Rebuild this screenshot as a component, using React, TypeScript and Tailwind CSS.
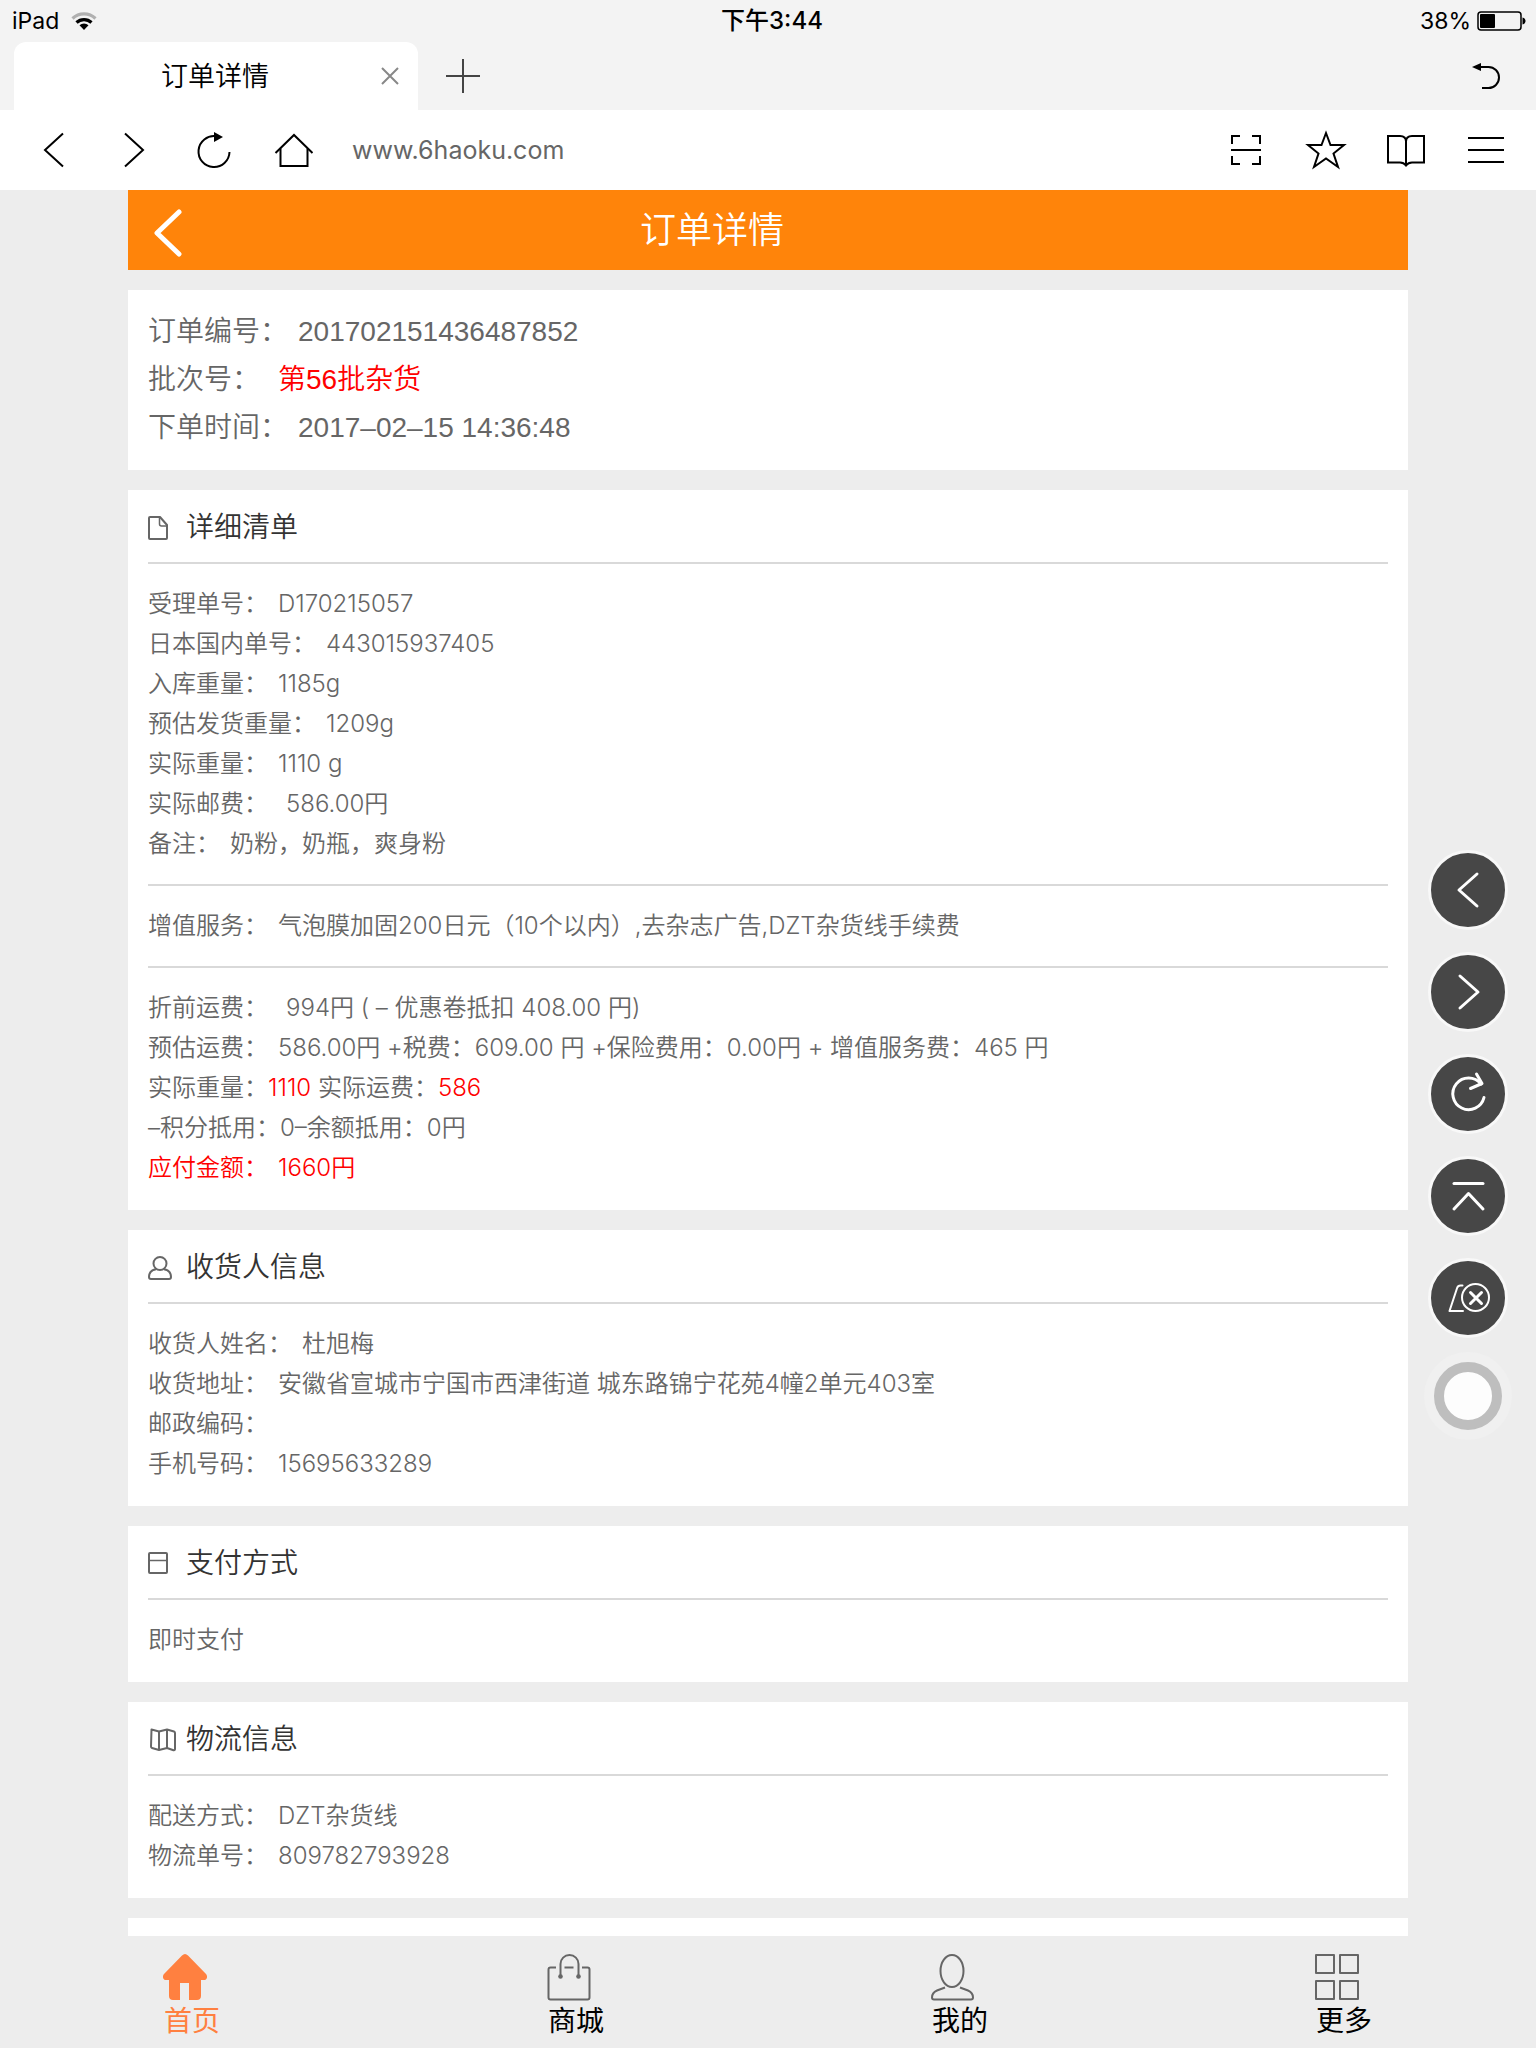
import React from 'react';

type Part = { text: string; red?: boolean };
type Row = { label: string; gap?: 'none' | 'one' | 'two'; parts?: Part[]; red?: boolean };

const gapClass = { none: '', one: 'pl-[10px]', two: 'pl-[18px]' };

function Line({ row, large = false }: { row: Row; large?: boolean }) {
  return (
    <p
      className={`${
        large
          ? "font-['Liberation_Sans','Noto_Sans_CJK_SC',sans-serif] text-[28px] leading-[48px]"
          : "font-['Inter','Noto_Sans_CJK_SC',sans-serif] text-2xl leading-10"
      } ${row.red ? 'text-[#ff0000]' : ''}`}
    >
      <span>{row.label}</span>
      {row.parts && (
        <span className={gapClass[row.gap ?? 'one']}>
          {row.parts.map((p, i) => (
            <span key={i} className={p.red ? 'text-[#ff0000]' : ''}>
              {p.text}
            </span>
          ))}
        </span>
      )}
    </p>
  );
}

const orderRows: Row[] = [
  { label: '订单编号：', gap: 'one', parts: [{ text: '201702151436487852' }] },
  { label: '批次号：', gap: 'two', parts: [{ text: '第56批杂货', red: true }] },
  { label: '下单时间：', gap: 'one', parts: [{ text: '2017–02–15 14:36:48' }] },
];

const detailGroups: Row[][] = [
  [
    { label: '受理单号：', parts: [{ text: 'D170215057' }] },
    { label: '日本国内单号：', parts: [{ text: '443015937405' }] },
    { label: '入库重量：', parts: [{ text: '1185g' }] },
    { label: '预估发货重量：', parts: [{ text: '1209g' }] },
    { label: '实际重量：', parts: [{ text: '1110 g' }] },
    { label: '实际邮费：', gap: 'two', parts: [{ text: '586.00円' }] },
    { label: '备注：', parts: [{ text: '奶粉，奶瓶，爽身粉' }] },
  ],
  [{ label: '增值服务：', parts: [{ text: '气泡膜加固200日元（10个以内）,去杂志广告,DZT杂货线手续费' }] }],
  [
    { label: '折前运费：', gap: 'two', parts: [{ text: '994円 ( – 优惠卷抵扣 408.00 円)' }] },
    {
      label: '预估运费：',
      parts: [{ text: '586.00円 +税费：609.00 円 +保险费用：0.00円 + 增值服务费：465 円' }],
    },
    {
      label: '实际重量：',
      gap: 'none',
      parts: [{ text: '1110', red: true }, { text: ' 实际运费：' }, { text: '586', red: true }],
    },
    { label: '–积分抵用：0–余额抵用：0円' },
    { label: '应付金额：', parts: [{ text: '1660円' }], red: true },
  ],
];

const receiverGroups: Row[][] = [
  [
    { label: '收货人姓名：', parts: [{ text: '杜旭梅' }] },
    { label: '收货地址：', parts: [{ text: '安徽省宣城市宁国市西津街道 城东路锦宁花苑4幢2单元403室' }] },
    { label: '邮政编码：' },
    { label: '手机号码：', parts: [{ text: '15695633289' }] },
  ],
];

const payGroups: Row[][] = [[{ label: '即时支付' }]];

const shipGroups: Row[][] = [
  [
    { label: '配送方式：', parts: [{ text: 'DZT杂货线' }] },
    { label: '物流单号：', parts: [{ text: '809782793928' }] },
  ],
];

function Card({ icon, title, groups }: { icon: React.ReactNode; title: string; groups: Row[][] }) {
  return (
    <section className="bg-white px-5">
      <h2 className="flex h-[74px] items-center border-b-2 border-[#d9d9d9] pt-1 text-[28px] text-[#333]">
        <span className="w-[38px]">{icon}</span>
        {title}
      </h2>
      {groups.map((rows, i) => (
        <div key={i} className="border-b-2 border-[#d9d9d9] py-5 last:border-transparent">
          {rows.map((r) => (
            <Line key={r.label} row={r} />
          ))}
        </div>
      ))}
    </section>
  );
}

const DocIcon = (
  <svg width="28" height="24" viewBox="0 0 28 24" fill="none" stroke="#666" strokeWidth="2" strokeLinejoin="round">
    <path d="M2 1h10l7 8v13a1 1 0 0 1-1 1H2a1 1 0 0 1-1-1V2a1 1 0 0 1 1-1z" />
    <path d="M11.500 1v7a2 2 0 0 0 2 2H19" strokeWidth="1.500" />
  </svg>
);
const PersonIcon = (
  <svg width="28" height="24" viewBox="0 0 28 24" fill="none" stroke="#666" strokeWidth="2">
    <circle cx="12" cy="7.500" r="6.500" />
    <path d="M8 13.200C3.500 14 1 17 1 21c0 1.300.7 2 2 2h18c1.300 0 2-.7 2-2 0-4-2.500-7-7-7.800" />
  </svg>
);
const PayIcon = (
  <svg width="28" height="24" viewBox="0 0 28 24" fill="none" stroke="#666">
    <rect x="1" y="1" width="18" height="20" rx="1" strokeWidth="2" />
    <path d="M1 8.500h18" strokeWidth="1.500" />
  </svg>
);
const MapIcon = (
  <svg width="28" height="24" viewBox="0 0 28 24" fill="none" stroke="#666" strokeWidth="2" strokeLinejoin="round">
    <path d="M3.500 1.500L11 3.500l8-2 7 2c.8.300 1 .7 1 1.500v16c0 1-.5 1.500-1.500 1.200L19 20l-8 2-7-2c-.7-.2-1-.7-1-1.500z" />
    <path d="M11 3.500V22M19 1.500V20" />
  </svg>
);

function ToolButton({ label, children }: { label: string; children: React.ReactNode }) {
  return (
    <button type="button" aria-label={label} className="flex h-20 w-20 items-center justify-center">
      <svg width="44" height="44" viewBox="0 0 44 44" fill="none" stroke="#000" strokeWidth="2">
        {children}
      </svg>
    </button>
  );
}

function FloatButton({ label, children }: { label: string; children: React.ReactNode }) {
  return (
    <button
      type="button"
      aria-label={label}
      className="flex h-20 w-20 items-center justify-center rounded-full border-[3px] border-[#f8f8f8] bg-[#474747]"
    >
      <svg
        width="48"
        height="48"
        viewBox="0 0 48 48"
        fill="none"
        stroke="#fff"
        strokeWidth="3"
        strokeLinecap="round"
        strokeLinejoin="round"
      >
        {children}
      </svg>
    </button>
  );
}

function NavItem({ label, active, children }: { label: string; active?: boolean; children: React.ReactNode }) {
  return (
    <a
      href="#"
      className={`mx-auto flex w-[58px] flex-col text-[28px] leading-10 ${active ? 'text-[#ff8040]' : 'text-black'}`}
    >
      <svg width="44" height="48" viewBox="0 0 44 48" fill="none" stroke="#666" strokeWidth="2">
        {children}
      </svg>
      <span className="text-center">{label}</span>
    </a>
  );
}

export default function App() {
  return (
    <div
      lang="zh-CN"
      className="relative flex min-h-screen flex-col bg-[#ededed] font-['Roboto','Noto_Sans_CJK_SC',sans-serif] font-[350] text-[#666]"
    >
      <div className="grid h-[42px] grid-cols-3 items-center bg-[#f3f3f3] px-3 font-['Inter','Noto_Sans_CJK_SC',sans-serif] text-[23px] font-normal text-black">
        <div className="flex items-center gap-3">
          <span>iPad</span>
          <svg width="26" height="20" viewBox="0 0 26 20" fill="none" strokeWidth="3.200">
            <path d="M1.500 7.500a16.500 16.500 0 0 1 23 0" stroke="#b0b0b0" />
            <path d="M5.500 11.500a11 11 0 0 1 15 0" stroke="#000" />
            <path d="M13 19l-4.500-4.800a6.500 6.500 0 0 1 9 0z" fill="#000" />
          </svg>
        </div>
        <span className="pl-2 text-center text-2xl font-medium">下午3:44</span>
        <div className="flex items-center justify-end gap-1.5">
          <span>38%</span>
          <svg width="49" height="20" viewBox="0 0 49 20" className="-mr-0.5">
            <rect x="1" y="1" width="43" height="18" rx="3" fill="none" stroke="#000" strokeWidth="1.500" />
            <rect x="3" y="3" width="15" height="14" rx="1" />
            <path d="M45.500 6.500c2 .6 3 1.800 3 3.500s-1 2.900-3 3.500z" />
          </svg>
        </div>
      </div>

      <div className="flex h-[68px] items-center bg-[#f3f3f3] pr-2.5 pl-3.5 text-black">
        <div className="flex h-full w-[404px] items-center rounded-t-xl bg-white pr-3">
          <span className="flex-1 pt-0.5 pl-[42px] text-center text-[27px]">订单详情</span>
          <button type="button" aria-label="关闭标签页" className="flex h-8 w-8 items-center justify-center">
            <svg width="18" height="18" viewBox="0 0 18 18" stroke="#888" strokeWidth="2">
              <path d="M1 1l16 16M17 1L1 17" />
            </svg>
          </button>
        </div>
        <button type="button" aria-label="新建标签页" className="ml-7 flex">
          <svg width="34" height="34" viewBox="0 0 34 34" stroke="#444" strokeWidth="2">
            <path d="M17 0v34M0 17h34" />
          </svg>
        </button>
        <button type="button" aria-label="撤销" className="ml-auto flex w-20 justify-center">
          <svg width="28" height="28" viewBox="0 0 28 28" fill="none" stroke="#000" strokeWidth="2">
            <path d="M8 5h8.500a10.500 10.500 0 0 1 0 21H10" />
            <path d="M9 1v8L0 5z" fill="#000" stroke="none" />
          </svg>
        </button>
      </div>

      <div className="flex h-20 items-center bg-white pr-2.5 pl-3.5">
        <ToolButton label="后退">
          <path d="M31 5.500L13 22l18 16.500" />
        </ToolButton>
        <ToolButton label="前进">
          <path d="M13 5.500L31 22 13 38.500" />
        </ToolButton>
        <ToolButton label="刷新">
          <path d="M24 8.200A15.500 15.500 0 1 0 37.500 24" />
          <path d="M22 4v10l9-5z" fill="#000" stroke="none" />
        </ToolButton>
        <ToolButton label="主页">
          <path d="M3.500 25L22 7l18.500 18" />
          <path d="M8.500 20.500V38h27V20.500" />
        </ToolButton>
        <input
          aria-label="网址"
          defaultValue="www.6haoku.com"
          className="min-w-0 flex-1 bg-transparent pt-0.5 pl-[18px] font-['Inter',sans-serif] text-[25px] font-normal text-[#666] outline-none"
        />
        <ToolButton label="扫描">
          <path d="M8 16V8h8M28 8h8v8M8 28v8h8M28 36h8v-8M7 22h30" />
        </ToolButton>
        <ToolButton label="收藏">
          <path d="M22 5l4.500 12H40L29.500 25.500 34 39l-12-8.500L10 39l4.500-13.500L4 17h13.500z" />
        </ToolButton>
        <ToolButton label="书签">
          <path d="M22 37.500c-1.500-2-3.500-3-6-3H4V8h12c3.500 0 6 2 6 5.500 0-3.500 2.500-5.500 6-5.500h12v26.500H28c-2.500 0-4.500 1-6 3zM22 13v24" />
        </ToolButton>
        <ToolButton label="菜单">
          <path d="M4 10h36M4 22h36M4 34h36" />
        </ToolButton>
      </div>

      <main className="mx-32 flex flex-1 flex-col gap-5">
        <header className="flex h-20 items-center bg-[#ff840a] pt-0.5 text-white">
          <button type="button" aria-label="返回" className="flex w-20 justify-center pt-1">
            <svg width="30" height="48" viewBox="0 0 30 48" fill="none" stroke="#fff" strokeWidth="5" strokeLinecap="round" strokeLinejoin="round">
              <path d="M26 3L4 24l22 21" />
            </svg>
          </button>
          <h1 className="flex-1 pr-48 text-center text-4xl">订单详情</h1>
        </header>

        <section className="bg-white px-5 py-[18px]">
          {orderRows.map((r) => (
            <Line key={r.label} row={r} large />
          ))}
        </section>

        <Card icon={DocIcon} title="详细清单" groups={detailGroups} />
        <Card icon={PersonIcon} title="收货人信息" groups={receiverGroups} />
        <Card icon={PayIcon} title="支付方式" groups={payGroups} />
        <Card icon={MapIcon} title="物流信息" groups={shipGroups} />
        <section className="min-h-[18px] flex-1 bg-white" />
      </main>

      <nav className="grid h-28 grid-cols-4 pt-[18px] font-normal">
        <NavItem label="首页" active>
          <path
            d="M19 1.500c2-2 4-2 6 0l18 18.500c2 2.500 1 6-2 6h-3v16c0 2.500-1.500 4-4 4h-8V29h-9v17h-7c-2.500 0-4-1.500-4-4V26H3c-3 0-4-3.500-2-6z"
            fill="#ff8040"
            stroke="none"
          />
        </NavItem>
        <NavItem label="商城">
          <path d="M9 13.500H3.500a2 2 0 0 0-2 2v28a2 2 0 0 0 2 2h37a2 2 0 0 0 2-2v-28a2 2 0 0 0-2-2H35M17.500 13.500h9" />
          <path d="M13.500 22V10a9 9 0 0 1 18 0v12" />
          <circle cx="13.500" cy="22.500" r="2.300" fill="#666" stroke="none" />
          <circle cx="31.500" cy="22.500" r="2.300" fill="#666" stroke="none" />
        </NavItem>
        <NavItem label="我的">
          <ellipse cx="21" cy="17" rx="11.500" ry="16" />
          <path d="M14 33.500L6 36.500c-3.500 1.500-5 4-5 7 0 1.200.8 2 2 2h37c1.200 0 2-.8 2-2 0-3-1.500-5.500-5-7l-8-3" />
        </NavItem>
        <NavItem label="更多">
          <path d="M1 1h18v18H1zM25 1h18v18H25zM1 27h18v18H1zM25 27h18v18H25z" strokeLinejoin="round" />
        </NavItem>
      </nav>

      <aside className="absolute top-[850px] right-6 flex flex-col items-center gap-[22px]">
        <FloatButton label="上一页">
          <path d="M33 8L15 24l18 16" />
        </FloatButton>
        <FloatButton label="下一页">
          <path d="M16 8l18 16-18 16" />
        </FloatButton>
        <FloatButton label="重新加载">
          <path d="M37 14A15.800 15.800 0 1 0 40 27.500" />
          <path d="M32.500 4L38 13.500 26.500 18.500" />
        </FloatButton>
        <FloatButton label="回到顶部">
          <path d="M10 11.500h29" />
          <path d="M10 37l14.500-15.500L39 37" />
        </FloatButton>
        <FloatButton label="清除">
          <path d="M18.500 11.500h-2c-1.800 0-2.800.7-3.400 2.500L5.500 37h13.500" strokeWidth="2" />
          <circle cx="31.500" cy="23.500" r="13.500" strokeWidth="2" />
          <path d="M26.500 18.500l11 11M37.500 18.500l-11 11" />
        </FloatButton>
        <button
          type="button"
          aria-label="辅助触控"
          className="-mt-2 flex h-[88px] w-[88px] items-center justify-center rounded-full bg-[#f0f0f0]"
        >
          <span className="h-[68px] w-[68px] rounded-full border-10 border-[#bebebe] bg-[#fdfdfd]" />
        </button>
      </aside>
    </div>
  );
}
